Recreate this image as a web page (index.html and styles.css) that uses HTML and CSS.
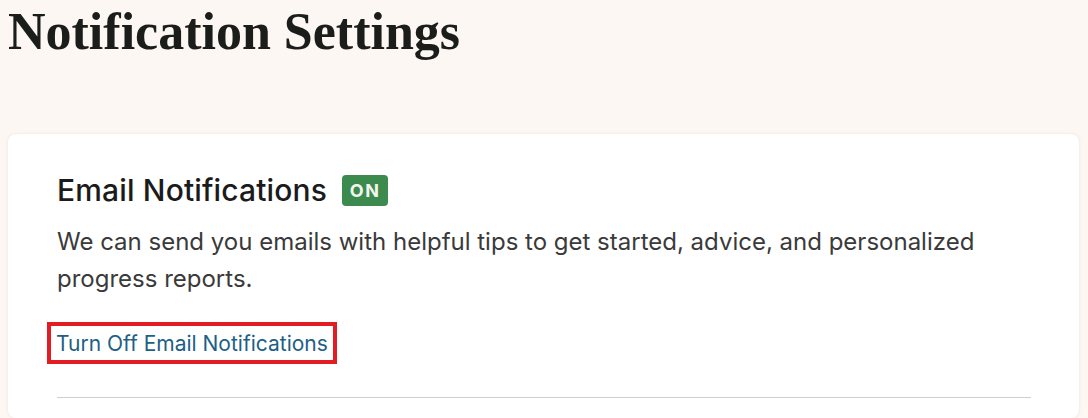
FILE: index.html
```html
<!DOCTYPE html>
<html lang="en">
<head>
<meta charset="utf-8">
<link rel="stylesheet" href="styles.css">
</head>
<body>
<main class="page">
  <h1 class="title">Notification Settings</h1>
  <section class="card">
    <div class="card-head">
      <h2 class="card-title">Email Notifications</h2>
      <span class="badge">ON</span>
    </div>
    <p class="desc">We can send you emails with helpful tips to get started, advice, and personalized progress reports.</p>
    <a class="toggle-link" href="#">Turn Off Email Notifications</a>
    <hr class="divider">
  </section>
</main>
</body>
</html>
```

FILE: styles.css
```css
html, body {
  margin: 0;
  padding: 0;
  background: #fdf7f4;
}
body {
  font-family: Inter, "Noto Sans", sans-serif;
  color: #1c1c1c;
}
.page {
  padding: 0 9px 0 8px;
}
.title {
  margin: 0;
  padding-top: 2px;
  font-family: "Liberation Serif", "DejaVu Serif", serif;
  font-weight: 700;
  font-size: 52px;
  line-height: 60px;
  color: #1a1d1a;
}
.card {
  margin-top: 72px;
  background: #ffffff;
  border-radius: 8px;
  box-shadow: 0 0 3px rgba(180, 160, 150, 0.25);
  padding: 38px 48px 20px 49px;
}
.card-head {
  display: flex;
  align-items: center;
  gap: 15px;
}
.card-title {
  margin: 0;
  font-size: 30px;
  font-weight: 500;
  line-height: 36px;
  letter-spacing: 0.15px;
  color: #1b1b1b;
}
.badge {
  display: inline-flex;
  align-items: center;
  justify-content: center;
  flex: none;
  width: 46px;
  height: 31px;
  background: #3c8a4e;
  color: #f3f6ef;
  border-radius: 4px;
  font-size: 18px;
  font-weight: 700;
  letter-spacing: 1.5px;
}
.desc {
  margin: 15px 0 0 0;
  font-size: 24px;
  line-height: 37px;
  color: #3a3a3a;
}
.toggle-link {
  display: inline-block;
  margin-top: 25px;
  margin-left: -10px;
  padding: 2px 5px 1px 5px;
  border: 4px solid #e31b23;
  font-size: 21px;
  line-height: 31px;
  color: #1d5f86;
  text-decoration: none;
}
.divider {
  margin: 33px 0 0 0;
  border: 0;
  border-top: 1px solid #cfcfcf;
}
```
